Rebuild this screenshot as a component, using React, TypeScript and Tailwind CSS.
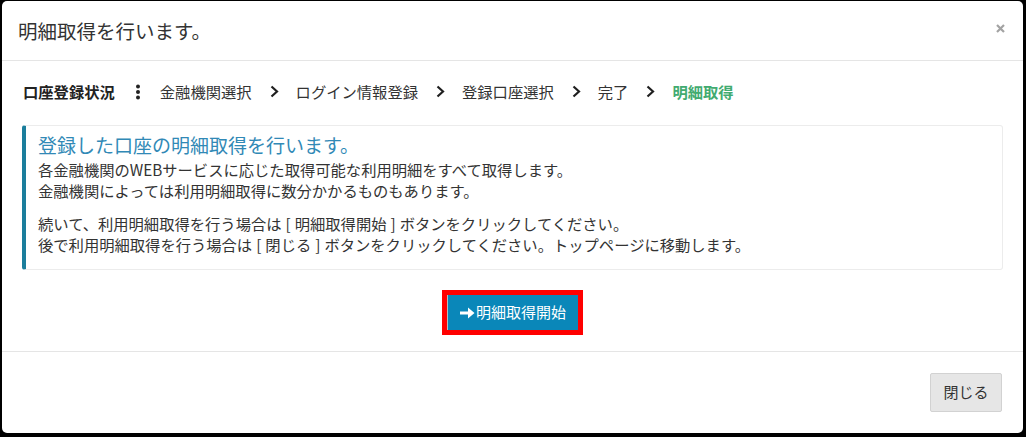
import { Fragment } from 'react';

const steps = ['金融機関選択', 'ログイン情報登録', '登録口座選択', '完了'];

function Chevron() {
  return (
    <svg width="9" height="13" viewBox="0 0 9 13" className="shrink-0">
      <polyline points="1.5,1.5 7,6.5 1.5,11.5" fill="none" stroke="#1f1f1f" strokeWidth="2.2" />
    </svg>
  );
}

function Kebab() {
  return (
    <svg width="6" height="16" viewBox="0 0 6 16" className="shrink-0">
      <circle cx="3" cy="2.5" r="2" fill="#222" />
      <circle cx="3" cy="8" r="2" fill="#222" />
      <circle cx="3" cy="13.5" r="2" fill="#222" />
    </svg>
  );
}

// Brackets in the original render wider than Noto's, so pad them a little
function Br({ c }: { c: string }) {
  return <span className="px-[4px]">{c}</span>;
}

function App() {
  return (
    <div className="h-[437px] w-[1026px] bg-black pl-[2px] pt-[1px] font-['Noto_Sans_CJK_JP',sans-serif] text-[#333]">
      <div className="flex h-[432px] w-[1021px] flex-col rounded-[5px] bg-white">
        <div className="flex h-[60px] items-center justify-between border-b border-[#e5e5e5] pl-[16px] pr-[18px]">
          <h4 className="text-[19.5px] leading-[26px] text-[#333]">明細取得を行います。</h4>
          <svg width="9" height="9" viewBox="0 0 9 9" className="mb-[5px]">
            <path d="M1 1L8 8M8 1L1 8" stroke="#a3a3a3" strokeWidth="2.2" />
          </svg>
        </div>

        <div className="flex flex-1 flex-col px-[20px] pt-[20px]">
          <div className="flex items-center text-[15.3px] leading-[21px]">
            <span className="ml-px font-bold text-[#222]">口座登録状況</span>
            <span className="ml-[20px] mr-[19px]">
              <Kebab />
            </span>
            {steps.map((s) => (
              <Fragment key={s}>
                <span className="text-[#333]">{s}</span>
                <span className="ml-[18px] mr-[17px]">
                  <Chevron />
                </span>
              </Fragment>
            ))}
            <span className="font-bold text-[#42ab70]">明細取得</span>
          </div>

          <div className="mt-[23px] h-[145px] rounded-[3px] border border-l-[4px] border-[#ececec] border-l-[#1b7e9c] pl-[12px] pr-4 pt-[6px]">
            <h4 className="text-[19px] leading-[26px] text-[#3189b6]">登録した口座の明細取得を行います。</h4>
            <p className="mt-[1px] text-[15.3px] leading-[21px]">
              各金融機関のWEBサービスに応じた取得可能な利用明細をすべて取得します。
              <br />
              金融機関によっては利用明細取得に数分かかるものもあります。
            </p>
            <p className="mt-[12px] text-[15.3px] leading-[21px]">
              続いて、利用明細取得を行う場合は<Br c="[" />明細取得開始<Br c="]" />ボタンをクリックしてください。
              <br />
              後で利用明細取得を行う場合は<Br c="[" />閉じる<Br c="]" />ボタンをクリックしてください。トップページに移動します。
            </p>
          </div>

          <div className="mt-[20px] flex justify-center">
            <div className="border-[5px] border-[#ff0000]">
              <button className="flex h-[35px] w-[131px] items-center justify-center border-l border-[#bbb] bg-[#0a87b9] text-[15px] text-white">
                <svg width="15" height="12" viewBox="0 0 15 12" className="mr-[1px]">
                  <path d="M0 4.5h8V0.5l6.5 5.5L8 11.5V7.5H0z" fill="#fff" />
                </svg>
                明細取得開始
              </button>
            </div>
          </div>
        </div>

        <div className="flex h-[82px] items-center justify-end border-t border-[#e5e5e5] pr-[21px]">
          <button className="h-[39px] w-[72px] rounded-[2px] border border-[#d2d2d2] bg-[#e6e6e6] text-[15px] text-[#333]">
            閉じる
          </button>
        </div>
      </div>
    </div>
  );
}

export default App;
